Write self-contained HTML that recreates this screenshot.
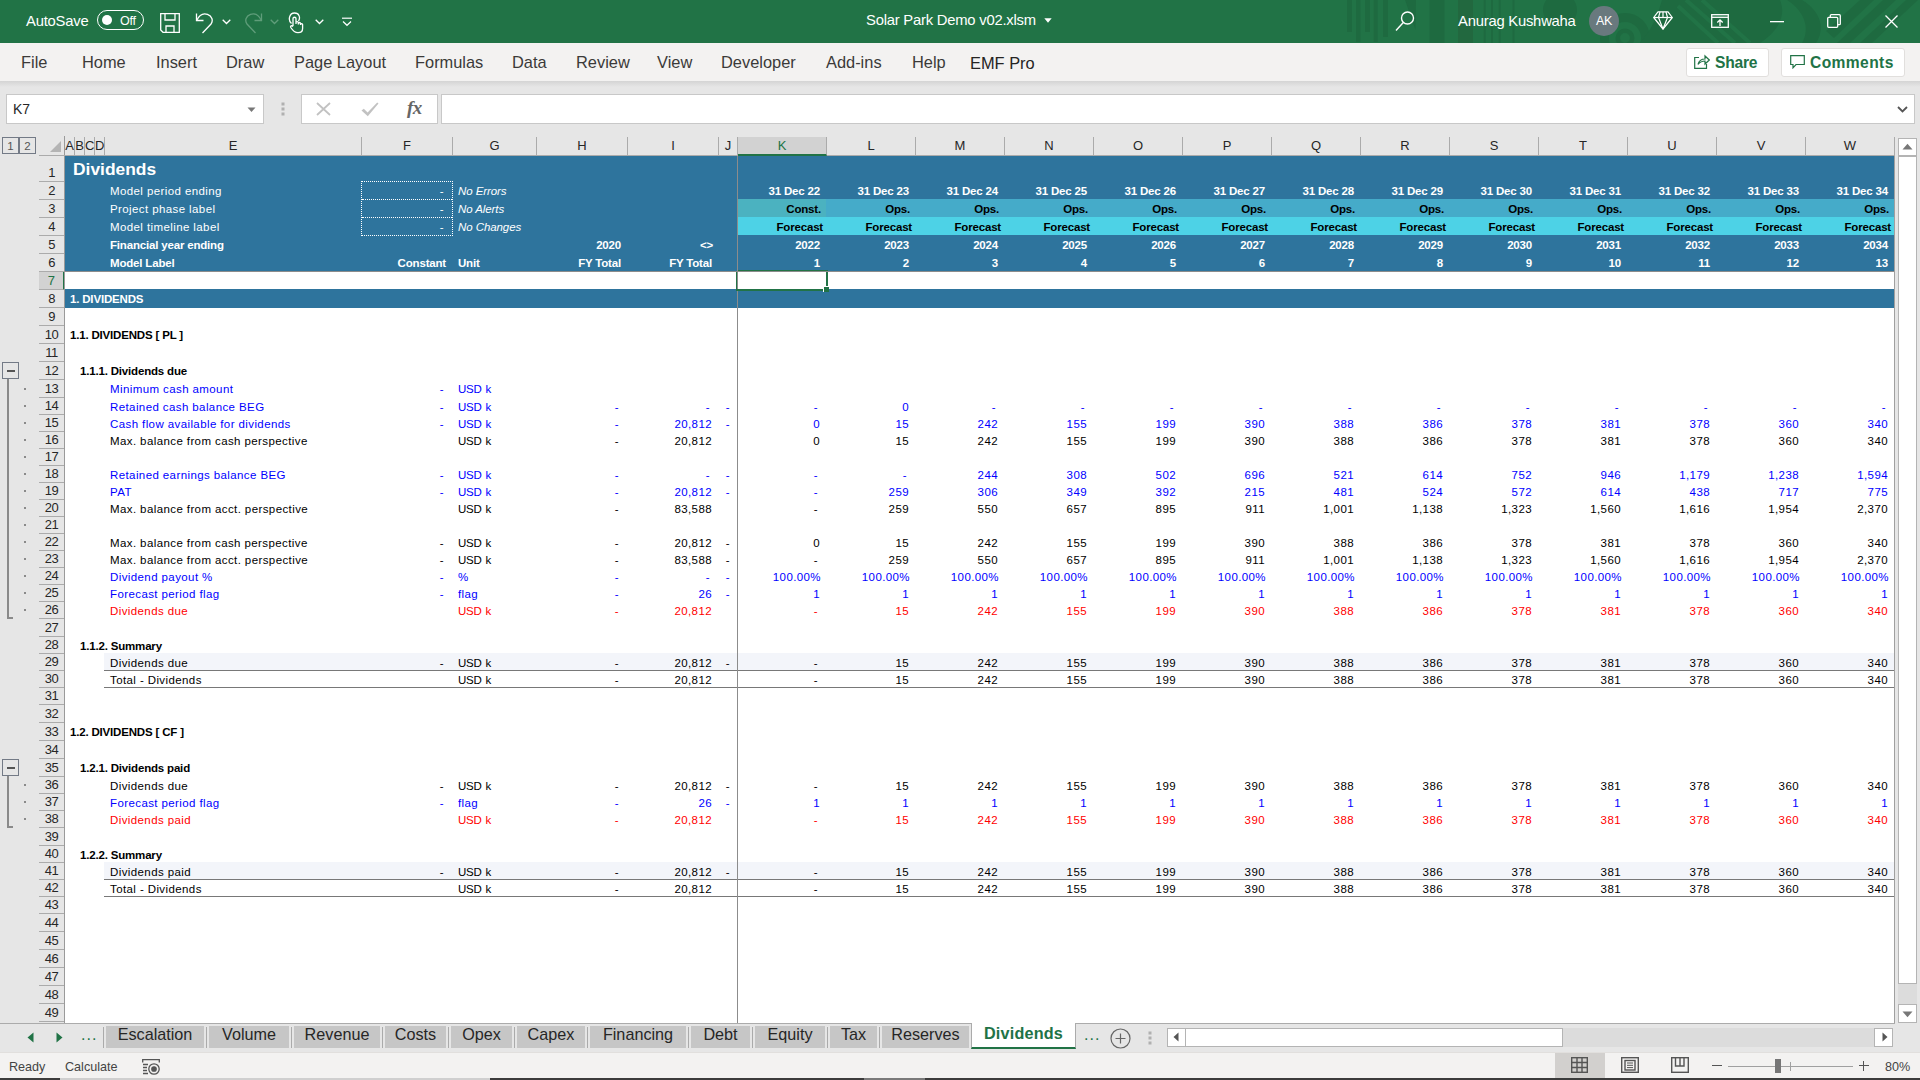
<!DOCTYPE html>
<html lang="en"><head><meta charset="utf-8"><title>Solar Park Demo v02.xlsm - Excel</title>
<style>
html,body{margin:0;padding:0;background:#e6e6e6;}
body{width:1920px;height:1080px;overflow:hidden;font-family:"Liberation Sans",sans-serif;}
#app{position:relative;width:1920px;height:1080px;overflow:hidden;background:#e6e6e6;}
#app div,#app span,#app svg{position:absolute;box-sizing:border-box;}
/* title bar */
#titlebar{left:0;top:0;width:1920px;height:43px;background:#217346;color:#fff;font-size:14.8px;letter-spacing:-0.22px;overflow:hidden;}
#titlebar .tt{white-space:nowrap;line-height:43px;top:0;height:43px;}
#menubar{left:0;top:43px;width:1920px;height:38px;background:#f3f2f1;color:#3b3a39;font-size:16.4px;}
#menubar .m{top:0;height:39px;line-height:38px;white-space:nowrap;color:#3b3a39;}
#menushadow{left:0;top:81px;width:1920px;height:6px;background:linear-gradient(#d4d4d4,#e6e6e6);}
.btn{background:#fff;border:1px solid #e1dfdd;border-radius:3px;}
/* formula bar */
#namebox{left:6px;top:94px;width:258px;height:30px;background:#fff;border:1px solid #c8c8c8;}
#fxbox{left:301px;top:94px;width:137px;height:30px;background:#fff;border:1px solid #c8c8c8;}
#formula{left:441px;top:94px;width:1474px;height:30px;background:#fff;border:1px solid #c8c8c8;}
/* sheet */
#sheet{left:0;top:0;width:1920px;height:1023px;}
#sheetbg{left:65px;top:156px;width:1830px;height:867px;background:#fff;}
#colhdr{left:0;top:137px;width:1895px;height:19px;}
.ch{top:0;height:19px;line-height:17px;text-align:center;font-size:13px;color:#262626;border-right:1px solid #ababab;border-bottom:1px solid #ababab;}
#app .ch{box-sizing:content-box;height:18px;}
.ch.sel{background:#d2d2d2;color:#217346;border-bottom:2px solid #217346;height:17px !important;}
#rowhdr{left:39px;top:0;width:26px;height:1023px;}
.rh{left:0;width:25px;text-align:center;padding-right:0;font-size:13px;letter-spacing:-0.5px;color:#262626;border-bottom:1px solid #ababab;}
#app .rh{box-sizing:content-box;width:25px;}
.rh.sel{background:#d2d2d2;color:#217346;border-right:2px solid #217346;width:24px !important;}
.f{}
.t{white-space:nowrap;font-size:11.5px;letter-spacing:0.4px;color:#000;overflow:visible;}
.t.r{text-align:right;}
.t.b{font-weight:bold;letter-spacing:-0.18px;}
.t.i{font-style:italic;letter-spacing:-0.08px;}
.t.u{letter-spacing:-0.3px;word-spacing:1.2px;}
.t.w{color:#fff;}
.t.bl{color:#0000ff;}
.t.rd{color:#ff0000;}
.t.title{font-size:17.4px;font-weight:bold;color:#fff;letter-spacing:0;}
.dot{border:1px dotted #fff;}
.g{background:#217346;}
/* outline */
.lvl{top:137px;width:17px;height:17px;border:1px solid #737a86;font-size:11.5px;line-height:17px;text-align:center;color:#555;}
.obox{left:2px;width:17px;height:17px;border:1px solid #737a86;background:#e6e6e6;}
.obox:after{content:"";position:absolute;left:4px;top:7px;width:8px;height:1px;background:#555;border-top:1px solid #555;}
.oline{left:7px;width:2px;background:#8a8a8a;}
.ofoot{left:7px;width:6px;height:2px;background:#8a8a8a;}
.odot{left:24px;width:2px;height:2px;background:#8a8a8a;}
/* bottom */
#tabbar{left:0;top:1024px;width:1920px;height:28px;background:#e6e6e6;}
.tab{top:2px;height:22px;background:#c6c6c6;font-size:16.2px;line-height:17px;text-align:center;color:#262626;white-space:nowrap;}
.tab.act{background:#fff;color:#217346;font-weight:bold;border-bottom:2px solid #217346;top:-1px;height:26px;line-height:21px;letter-spacing:0.2px;border-left:1px solid #ababab;border-right:1px solid #ababab;}
.tsep{top:3px;width:1px;height:21px;background:#ababab;}
#statusbar{left:0;top:1052px;width:1920px;height:26px;background:#f3f2f1;color:#444;font-size:12.6px;border-top:1px solid #e1dfdd;}
#statusbar .s{top:0;height:26px;line-height:29px;white-space:nowrap;}
#bottomline{left:0;top:1078px;width:1920px;height:2px;background:#3c3c3c;}
.doth{height:0;border-top:1px dotted #fff;}

</style></head>
<body>
<div id="app">
<div id="titlebar">
<svg id="tbpattern" style="left:1340px;top:0" width="580" height="43" viewBox="0 0 580 43">
<g fill="#1e6a40">
<rect x="7" y="0" width="5" height="32"/><rect x="16" y="0" width="4.5" height="42"/><rect x="25" y="0" width="5" height="32"/><rect x="33.7" y="0" width="4" height="42"/><rect x="43" y="0" width="5" height="37"/>
<path d="M65 0H76L75.5 30Z"/>
<rect x="89.5" y="0" width="15" height="43"/>
<rect x="118" y="0" width="15" height="43" fill="#22683f"/>
<rect x="143.7" y="0" width="2" height="43"/><rect x="151" y="0" width="2" height="43"/><rect x="158.7" y="0" width="2" height="43"/><rect x="172.5" y="0" width="2" height="43"/>
<circle cx="220" cy="10" r="17"/>
<circle cx="285" cy="38" r="7.2" fill="none" stroke="#1e6a40" stroke-width="4.5"/>
<circle cx="285" cy="38" r="20.5" fill="none" stroke="#1e6a40" stroke-width="9"/>
<path d="M322 0 C318 14 312 30 300 43 L420 43 C440 30 446 14 440 0Z"/>
</g>
<g stroke="#217346" stroke-width="4" fill="none"><path d="M338 6L378 43M346 0L395 43M362 0L410 43"/></g>
<g fill="#1e6a40">
<path d="M447 0 C466 12 470 30 462 43 L476 43 C485 30 482 12 462 0Z"/>
<path d="M520 0 L534 0 L494 38 L486 31Z"/><path d="M543 0 L556 0 L510 43 L497 43Z"/><path d="M566 0 L578 0 L532 43 L520 43Z"/>
</g>
</svg>
<span class="tt" style="left:26px">AutoSave</span>
<div style="left:97px;top:10px;width:47px;height:20px;border:1px solid #fff;border-radius:10px"></div>
<div style="left:102px;top:15px;width:10px;height:10px;border-radius:5px;background:#fff"></div>
<span class="tt" style="left:120px;font-size:12.5px;top:0">Off</span>
<!-- save -->
<svg style="left:160px;top:13px" width="20" height="20" viewBox="0 0 20 20" fill="none" stroke="#fff" stroke-width="1.3"><path d="M0.7 0.7H19.3V19.3H3L0.7 17Z"/><path d="M5 0.7V7H15V0.7"/><path d="M6 19.3V13H14V19.3"/></svg>
<!-- undo -->
<svg style="left:195px;top:12px" width="20" height="22" viewBox="0 0 20 22" fill="none" stroke="#fff" stroke-width="1.3"><path d="M1.5 1.5V8.5H8.5"/><path d="M1.8 8.2C4 3.5 8 0.8 12.5 2.3C17 4 18.5 8.5 16 12L7.5 21"/></svg>
<svg style="left:222px;top:19px" width="9" height="6" viewBox="0 0 9 6" fill="none" stroke="#fff" stroke-width="1.3"><path d="M0.7 0.7L4.5 4.5L8.3 0.7"/></svg>
<!-- redo (dim) -->
<svg style="left:243px;top:12px" width="20" height="22" viewBox="0 0 20 22" fill="none" stroke="#5f9d7a" stroke-width="1.3"><path d="M18.5 1.5V8.5H11.5"/><path d="M18.2 8.2C16 3.5 12 0.8 7.5 2.3C3 4 1.5 8.5 4 12L12.5 21"/></svg>
<svg style="left:270px;top:19px" width="9" height="6" viewBox="0 0 9 6" fill="none" stroke="#5f9d7a" stroke-width="1.3"><path d="M0.7 0.7L4.5 4.5L8.3 0.7"/></svg>
<!-- touch -->
<svg style="left:288px;top:12px" width="16" height="22" viewBox="0 0 16 22" fill="none" stroke="#fff" stroke-width="1.3"><path d="M3.5 11.5C-0.5 8 1.5 1 6.5 1C11.5 1 12.5 6 10.5 9"/><path d="M5 14V6.5C5 4.8 8 4.8 8 6.5V12V10.5C8 9.3 10.3 9.3 10.3 10.5V12.5V11.3C10.3 10.2 12.5 10.2 12.5 11.5V13V12.3C12.5 11.3 14.6 11.3 14.6 12.5V16.5C14.6 19 13 20.7 10 20.7C6.5 20.7 5 19 2.8 15.5C2 14 3.5 13 5 14.5"/></svg>
<svg style="left:315px;top:19px" width="9" height="6" viewBox="0 0 9 6" fill="none" stroke="#fff" stroke-width="1.3"><path d="M0.7 0.7L4.5 4.5L8.3 0.7"/></svg>
<svg style="left:342px;top:17px" width="10" height="10" viewBox="0 0 10 10" fill="none" stroke="#fff" stroke-width="1.2"><path d="M0 1.2H10"/><path d="M1 4.5L5 8.3L9 4.5"/></svg>
<span class="tt" style="left:866px;top:-1px">Solar Park Demo v02.xlsm</span>
<svg style="left:1044px;top:18px" width="8" height="5" viewBox="0 0 8 5"><path d="M0.3 0.3H7.7L4 4.7Z" fill="#fff"/></svg>
<!-- search -->
<svg style="left:1395px;top:10px" width="20" height="22" viewBox="0 0 20 22" fill="none" stroke="#fff" stroke-width="1.4"><circle cx="12.5" cy="8" r="6"/><path d="M8.3 12.5L1 20.5"/></svg>
<span class="tt" style="left:1458px">Anurag Kushwaha</span>
<div style="left:1589px;top:6px;width:30px;height:30px;border-radius:15px;background:#69797e"></div>
<span class="tt" style="left:1589px;width:30px;text-align:center;font-size:12.5px">AK</span>
<!-- diamond -->
<svg style="left:1653px;top:11px" width="20" height="19" viewBox="0 0 20 19" fill="none" stroke="#fff" stroke-width="1.2" stroke-linejoin="round"><path d="M5 0.8H15L19.3 6.5L10 18L0.7 6.5Z"/><path d="M0.7 6.5H19.3"/><path d="M7 0.8L5.5 6.5L10 18L14.5 6.5L13 0.8"/><path d="M10 0.8V6.5"/></svg>
<!-- ribbon display -->
<svg style="left:1711px;top:14px" width="18" height="14" viewBox="0 0 18 14" fill="none" stroke="#fff" stroke-width="1.3"><rect x="0.7" y="0.7" width="16.6" height="12.6"/><path d="M0.7 3.3H17.3"/><path d="M9 12V6M6.3 8.5L9 5.8L11.7 8.5"/></svg>
<!-- min / restore / close -->
<svg style="left:1770px;top:21px" width="14" height="2" viewBox="0 0 14 2"><rect width="14" height="1.3" fill="#fff"/></svg>
<svg style="left:1827px;top:14px" width="14" height="14" viewBox="0 0 14 14" fill="none" stroke="#fff" stroke-width="1.3"><rect x="0.7" y="3.3" width="10" height="10" rx="1"/><path d="M3.3 3.3V1.7C3.3 1 3.8 0.7 4.3 0.7H12.3C13 0.7 13.3 1.2 13.3 1.7V9.7C13.3 10.3 13 10.7 12.3 10.7H10.7"/></svg>
<svg style="left:1885px;top:15px" width="13" height="13" viewBox="0 0 13 13" fill="none" stroke="#fff" stroke-width="1.3"><path d="M0.5 0.5L12.5 12.5M12.5 0.5L0.5 12.5"/></svg>
</div>
<div id="menubar">
<span class="m" style="left:21px">File</span>
<span class="m" style="left:82px">Home</span>
<span class="m" style="left:156px">Insert</span>
<span class="m" style="left:226px">Draw</span>
<span class="m" style="left:294px">Page Layout</span>
<span class="m" style="left:415px">Formulas</span>
<span class="m" style="left:512px">Data</span>
<span class="m" style="left:576px">Review</span>
<span class="m" style="left:657px">View</span>
<span class="m" style="left:721px">Developer</span>
<span class="m" style="left:826px">Add-ins</span>
<span class="m" style="left:912px">Help</span>
<span class="m" style="left:970px;color:#252423;line-height:40px">EMF Pro</span>
<div class="btn" style="left:1686px;top:5px;width:83px;height:29px"></div>
<svg style="left:1694px;top:11px" width="16" height="15" viewBox="0 0 16 15" fill="none" stroke="#217346" stroke-width="1.2"><path d="M5 3.5H0.7V14.3H12.5V10"/><path d="M4 10.5C5 6.5 8 5 11 5V2L15.3 6L11 10V7C8 7 6 8 4 10.5Z"/></svg>
<span class="m" style="left:1715px;font-weight:bold;font-size:15.6px;color:#217346;letter-spacing:-0.2px;line-height:40px">Share</span>
<div class="btn" style="left:1781px;top:5px;width:124px;height:29px"></div>
<svg style="left:1790px;top:12px" width="15" height="14" viewBox="0 0 15 14" fill="none" stroke="#217346" stroke-width="1.2"><path d="M0.7 0.7H14.3V9.5H6L3 12.8V9.5H0.7Z"/></svg>
<span class="m" style="left:1810px;font-weight:bold;font-size:15.6px;color:#217346;letter-spacing:0.4px;line-height:40px">Comments</span>
</div>
<div id="menushadow"></div>
<div id="namebox"><span style="left:6px;top:0;line-height:28px;font-size:14px;color:#262626">K7</span>
<svg style="left:240px;top:12px" width="9" height="6" viewBox="0 0 9 6"><path d="M0.5 0.5H8.5L4.5 5Z" fill="#777"/></svg></div>
<svg style="left:281px;top:102px" width="4" height="14" viewBox="0 0 4 14" fill="#b0b0b0"><rect x="0.5" y="0.5" width="3" height="3"/><rect x="0.5" y="5.5" width="3" height="3"/><rect x="0.5" y="10.5" width="3" height="3"/></svg>
<div id="fxbox">
<svg style="left:14px;top:7px" width="15" height="14" viewBox="0 0 15 14" fill="none" stroke="#c2c2c2" stroke-width="1.8"><path d="M1 1L14 13M14 1L1 13"/></svg>
<svg style="left:59px;top:7px" width="18" height="15" viewBox="0 0 18 15" fill="#c2c2c2"><path d="M0.5 8.5L2.8 6.8L6.6 10.6L16.2 0.5L17.5 1.6L6.8 14.2Z"/></svg>
<span style="left:105px;top:0;line-height:26px;font-family:'Liberation Serif',serif;font-style:italic;font-weight:bold;font-size:19px;color:#666;letter-spacing:-0.5px">fx</span>
</div>
<div id="formula"><svg style="left:1455px;top:11px" width="11" height="7" viewBox="0 0 11 7" fill="none" stroke="#555" stroke-width="1.8"><path d="M1 1L5.5 5.5L10 1"/></svg></div>
<div id="sheetbg"></div>
<div style="left:1895px;top:130px;width:25px;height:893px;background:#e6e6e6"></div>
<div style="left:1898px;top:138px;width:19px;height:885px;background:#dcdcdc"></div>
<div style="left:1898px;top:156px;width:19px;height:828px;background:#fff;border:1px solid #b4b4b4"></div>
<div style="left:1898px;top:138px;width:19px;height:19px;background:#fff;border:1px solid #b4b4b4;border-bottom:2px solid #b4b4b4"></div>
<svg style="left:1902px;top:143px" width="11" height="7" viewBox="0 0 11 7"><path d="M0.5 6.5H10.5L5.5 0.8Z" fill="#777"/></svg>
<div style="left:1898px;top:1004px;width:19px;height:19px;background:#fff;border:1px solid #b4b4b4"></div>
<svg style="left:1902px;top:1011px" width="11" height="7" viewBox="0 0 11 7"><path d="M0.5 0.5H10.5L5.5 6.2Z" fill="#777"/></svg>
<div id="sheet">
<div id="colhdr"><div class="ch" style="left:65px;width:9px">A</div><div class="ch" style="left:75px;width:9px">B</div><div class="ch" style="left:85px;width:9px">C</div><div class="ch" style="left:95px;width:9px">D</div><div class="ch" style="left:105px;width:256px">E</div><div class="ch" style="left:362px;width:90px">F</div><div class="ch" style="left:453px;width:83px">G</div><div class="ch" style="left:537px;width:90px">H</div><div class="ch" style="left:628px;width:90px">I</div><div class="ch" style="left:719px;width:18px">J</div><div class="ch sel" style="left:738px;width:88px">K</div><div class="ch" style="left:827px;width:88px">L</div><div class="ch" style="left:916px;width:88px">M</div><div class="ch" style="left:1005px;width:88px">N</div><div class="ch" style="left:1094px;width:88px">O</div><div class="ch" style="left:1183px;width:88px">P</div><div class="ch" style="left:1272px;width:88px">Q</div><div class="ch" style="left:1361px;width:88px">R</div><div class="ch" style="left:1450px;width:88px">S</div><div class="ch" style="left:1539px;width:88px">T</div><div class="ch" style="left:1628px;width:88px">U</div><div class="ch" style="left:1717px;width:88px">V</div><div class="ch" style="left:1806px;width:88px">W</div></div>
<div id="rowhdr"><div class="rh" style="top:156px;height:25px;line-height:34px">1</div><div class="rh" style="top:182px;height:17px;line-height:18px">2</div><div class="rh" style="top:200px;height:17px;line-height:18px">3</div><div class="rh" style="top:218px;height:17px;line-height:18px">4</div><div class="rh" style="top:236px;height:17px;line-height:18px">5</div><div class="rh" style="top:254px;height:17px;line-height:18px">6</div><div class="rh sel" style="top:272px;height:17px;line-height:18px">7</div><div class="rh" style="top:290px;height:17px;line-height:18px">8</div><div class="rh" style="top:308px;height:17px;line-height:18px">9</div><div class="rh" style="top:326px;height:17px;line-height:18px">10</div><div class="rh" style="top:344px;height:17px;line-height:18px">11</div><div class="rh" style="top:362px;height:17px;line-height:18px">12</div><div class="rh" style="top:380px;height:17px;line-height:18px">13</div><div class="rh" style="top:398px;height:16px;line-height:15px">14</div><div class="rh" style="top:415px;height:16px;line-height:15px">15</div><div class="rh" style="top:432px;height:16px;line-height:15px">16</div><div class="rh" style="top:449px;height:16px;line-height:15px">17</div><div class="rh" style="top:466px;height:16px;line-height:15px">18</div><div class="rh" style="top:483px;height:16px;line-height:15px">19</div><div class="rh" style="top:500px;height:16px;line-height:15px">20</div><div class="rh" style="top:517px;height:16px;line-height:15px">21</div><div class="rh" style="top:534px;height:16px;line-height:15px">22</div><div class="rh" style="top:551px;height:16px;line-height:15px">23</div><div class="rh" style="top:568px;height:16px;line-height:15px">24</div><div class="rh" style="top:585px;height:16px;line-height:15px">25</div><div class="rh" style="top:602px;height:16px;line-height:15px">26</div><div class="rh" style="top:619px;height:17px;line-height:18px">27</div><div class="rh" style="top:637px;height:16px;line-height:15px">28</div><div class="rh" style="top:654px;height:16px;line-height:15px">29</div><div class="rh" style="top:671px;height:16px;line-height:15px">30</div><div class="rh" style="top:688px;height:16px;line-height:15px">31</div><div class="rh" style="top:705px;height:17px;line-height:18px">32</div><div class="rh" style="top:723px;height:17px;line-height:18px">33</div><div class="rh" style="top:741px;height:17px;line-height:18px">34</div><div class="rh" style="top:759px;height:17px;line-height:18px">35</div><div class="rh" style="top:777px;height:16px;line-height:15px">36</div><div class="rh" style="top:794px;height:16px;line-height:15px">37</div><div class="rh" style="top:811px;height:16px;line-height:15px">38</div><div class="rh" style="top:828px;height:17px;line-height:18px">39</div><div class="rh" style="top:846px;height:16px;line-height:15px">40</div><div class="rh" style="top:863px;height:16px;line-height:15px">41</div><div class="rh" style="top:880px;height:16px;line-height:15px">42</div><div class="rh" style="top:897px;height:16px;line-height:15px">43</div><div class="rh" style="top:914px;height:17px;line-height:18px">44</div><div class="rh" style="top:932px;height:17px;line-height:18px">45</div><div class="rh" style="top:950px;height:17px;line-height:18px">46</div><div class="rh" style="top:968px;height:17px;line-height:18px">47</div><div class="rh" style="top:986px;height:17px;line-height:18px">48</div><div class="rh" style="top:1004px;height:17px;line-height:18px">49</div></div>
<div class="f" style="left:65px;top:156px;width:1830px;height:116px;background:#2e749d;"></div><div class="f" style="left:65px;top:289px;width:1830px;height:19px;background:#2e749d;"></div><div class="f" style="left:738px;top:199px;width:88px;height:18px;background:#4bb2c0;"></div><div class="f" style="left:826px;top:199px;width:1069px;height:18px;background:#45abc9;"></div><div class="f" style="left:738px;top:217px;width:1157px;height:18px;background:#4dd2e6;"></div><div class="f" style="left:104px;top:653px;width:1791px;height:17px;background:#f3f5fa;"></div><div class="f" style="left:104px;top:670px;width:1791px;height:1px;background:#787878;"></div><div class="f" style="left:104px;top:687px;width:1791px;height:1px;background:#787878;"></div><div class="f" style="left:104px;top:862px;width:1791px;height:17px;background:#f3f5fa;"></div><div class="f" style="left:104px;top:879px;width:1791px;height:1px;background:#787878;"></div><div class="f" style="left:104px;top:896px;width:1791px;height:1px;background:#787878;"></div><div class="dot" style="left:361px;top:181px;width:92px;height:55px"></div><div class="doth" style="left:362px;top:199px;width:90px"></div><div class="doth" style="left:362px;top:217px;width:90px"></div><div class="t title" style="left:73px;top:156px;height:26px;line-height:27px">Dividends</div><div class="t w" style="left:110px;top:182px;height:18px;line-height:19px">Model period ending</div><div class="t w" style="left:110px;top:200px;height:18px;line-height:19px">Project phase label</div><div class="t w" style="left:110px;top:218px;height:18px;line-height:19px">Model timeline label</div><div class="t w b" style="left:110px;top:236px;height:18px;line-height:19px">Financial year ending</div><div class="t w b" style="left:110px;top:254px;height:18px;line-height:19px">Model Label</div><div class="t r w" style="left:324px;width:120px;top:182px;height:18px;line-height:19px">-</div><div class="t r w" style="left:324px;width:120px;top:200px;height:18px;line-height:19px">-</div><div class="t r w" style="left:324px;width:120px;top:218px;height:18px;line-height:19px">-</div><div class="t w i" style="left:458px;top:182px;height:18px;line-height:19px">No Errors</div><div class="t w i" style="left:458px;top:200px;height:18px;line-height:19px">No Alerts</div><div class="t w i" style="left:458px;top:218px;height:18px;line-height:19px">No Changes</div><div class="t r w b" style="left:501px;width:120px;top:236px;height:18px;line-height:19px">2020</div><div class="t r w b" style="left:593px;width:120px;top:236px;height:18px;line-height:19px">&lt;&gt;</div><div class="t r w b" style="left:326px;width:120px;top:254px;height:18px;line-height:19px">Constant</div><div class="t w b" style="left:458px;top:254px;height:18px;line-height:19px">Unit</div><div class="t r w b" style="left:501px;width:120px;top:254px;height:18px;line-height:19px">FY Total</div><div class="t r w b" style="left:592px;width:120px;top:254px;height:18px;line-height:19px">FY Total</div><div class="t r w b" style="left:700px;width:120px;top:182px;height:18px;line-height:19px">31 Dec 22</div><div class="t r b" style="left:701px;width:120px;top:200px;height:18px;line-height:19px">Const.</div><div class="t r b" style="left:703px;width:120px;top:218px;height:18px;line-height:19px">Forecast</div><div class="t r w b" style="left:700px;width:120px;top:236px;height:18px;line-height:19px">2022</div><div class="t r w b" style="left:700px;width:120px;top:254px;height:18px;line-height:19px">1</div><div class="t r w b" style="left:789px;width:120px;top:182px;height:18px;line-height:19px">31 Dec 23</div><div class="t r b" style="left:790px;width:120px;top:200px;height:18px;line-height:19px">Ops.</div><div class="t r b" style="left:792px;width:120px;top:218px;height:18px;line-height:19px">Forecast</div><div class="t r w b" style="left:789px;width:120px;top:236px;height:18px;line-height:19px">2023</div><div class="t r w b" style="left:789px;width:120px;top:254px;height:18px;line-height:19px">2</div><div class="t r w b" style="left:878px;width:120px;top:182px;height:18px;line-height:19px">31 Dec 24</div><div class="t r b" style="left:879px;width:120px;top:200px;height:18px;line-height:19px">Ops.</div><div class="t r b" style="left:881px;width:120px;top:218px;height:18px;line-height:19px">Forecast</div><div class="t r w b" style="left:878px;width:120px;top:236px;height:18px;line-height:19px">2024</div><div class="t r w b" style="left:878px;width:120px;top:254px;height:18px;line-height:19px">3</div><div class="t r w b" style="left:967px;width:120px;top:182px;height:18px;line-height:19px">31 Dec 25</div><div class="t r b" style="left:968px;width:120px;top:200px;height:18px;line-height:19px">Ops.</div><div class="t r b" style="left:970px;width:120px;top:218px;height:18px;line-height:19px">Forecast</div><div class="t r w b" style="left:967px;width:120px;top:236px;height:18px;line-height:19px">2025</div><div class="t r w b" style="left:967px;width:120px;top:254px;height:18px;line-height:19px">4</div><div class="t r w b" style="left:1056px;width:120px;top:182px;height:18px;line-height:19px">31 Dec 26</div><div class="t r b" style="left:1057px;width:120px;top:200px;height:18px;line-height:19px">Ops.</div><div class="t r b" style="left:1059px;width:120px;top:218px;height:18px;line-height:19px">Forecast</div><div class="t r w b" style="left:1056px;width:120px;top:236px;height:18px;line-height:19px">2026</div><div class="t r w b" style="left:1056px;width:120px;top:254px;height:18px;line-height:19px">5</div><div class="t r w b" style="left:1145px;width:120px;top:182px;height:18px;line-height:19px">31 Dec 27</div><div class="t r b" style="left:1146px;width:120px;top:200px;height:18px;line-height:19px">Ops.</div><div class="t r b" style="left:1148px;width:120px;top:218px;height:18px;line-height:19px">Forecast</div><div class="t r w b" style="left:1145px;width:120px;top:236px;height:18px;line-height:19px">2027</div><div class="t r w b" style="left:1145px;width:120px;top:254px;height:18px;line-height:19px">6</div><div class="t r w b" style="left:1234px;width:120px;top:182px;height:18px;line-height:19px">31 Dec 28</div><div class="t r b" style="left:1235px;width:120px;top:200px;height:18px;line-height:19px">Ops.</div><div class="t r b" style="left:1237px;width:120px;top:218px;height:18px;line-height:19px">Forecast</div><div class="t r w b" style="left:1234px;width:120px;top:236px;height:18px;line-height:19px">2028</div><div class="t r w b" style="left:1234px;width:120px;top:254px;height:18px;line-height:19px">7</div><div class="t r w b" style="left:1323px;width:120px;top:182px;height:18px;line-height:19px">31 Dec 29</div><div class="t r b" style="left:1324px;width:120px;top:200px;height:18px;line-height:19px">Ops.</div><div class="t r b" style="left:1326px;width:120px;top:218px;height:18px;line-height:19px">Forecast</div><div class="t r w b" style="left:1323px;width:120px;top:236px;height:18px;line-height:19px">2029</div><div class="t r w b" style="left:1323px;width:120px;top:254px;height:18px;line-height:19px">8</div><div class="t r w b" style="left:1412px;width:120px;top:182px;height:18px;line-height:19px">31 Dec 30</div><div class="t r b" style="left:1413px;width:120px;top:200px;height:18px;line-height:19px">Ops.</div><div class="t r b" style="left:1415px;width:120px;top:218px;height:18px;line-height:19px">Forecast</div><div class="t r w b" style="left:1412px;width:120px;top:236px;height:18px;line-height:19px">2030</div><div class="t r w b" style="left:1412px;width:120px;top:254px;height:18px;line-height:19px">9</div><div class="t r w b" style="left:1501px;width:120px;top:182px;height:18px;line-height:19px">31 Dec 31</div><div class="t r b" style="left:1502px;width:120px;top:200px;height:18px;line-height:19px">Ops.</div><div class="t r b" style="left:1504px;width:120px;top:218px;height:18px;line-height:19px">Forecast</div><div class="t r w b" style="left:1501px;width:120px;top:236px;height:18px;line-height:19px">2031</div><div class="t r w b" style="left:1501px;width:120px;top:254px;height:18px;line-height:19px">10</div><div class="t r w b" style="left:1590px;width:120px;top:182px;height:18px;line-height:19px">31 Dec 32</div><div class="t r b" style="left:1591px;width:120px;top:200px;height:18px;line-height:19px">Ops.</div><div class="t r b" style="left:1593px;width:120px;top:218px;height:18px;line-height:19px">Forecast</div><div class="t r w b" style="left:1590px;width:120px;top:236px;height:18px;line-height:19px">2032</div><div class="t r w b" style="left:1590px;width:120px;top:254px;height:18px;line-height:19px">11</div><div class="t r w b" style="left:1679px;width:120px;top:182px;height:18px;line-height:19px">31 Dec 33</div><div class="t r b" style="left:1680px;width:120px;top:200px;height:18px;line-height:19px">Ops.</div><div class="t r b" style="left:1682px;width:120px;top:218px;height:18px;line-height:19px">Forecast</div><div class="t r w b" style="left:1679px;width:120px;top:236px;height:18px;line-height:19px">2033</div><div class="t r w b" style="left:1679px;width:120px;top:254px;height:18px;line-height:19px">12</div><div class="t r w b" style="left:1768px;width:120px;top:182px;height:18px;line-height:19px">31 Dec 34</div><div class="t r b" style="left:1769px;width:120px;top:200px;height:18px;line-height:19px">Ops.</div><div class="t r b" style="left:1771px;width:120px;top:218px;height:18px;line-height:19px">Forecast</div><div class="t r w b" style="left:1768px;width:120px;top:236px;height:18px;line-height:19px">2034</div><div class="t r w b" style="left:1768px;width:120px;top:254px;height:18px;line-height:19px">13</div><div class="t w b" style="left:70px;top:290px;height:18px;line-height:19px">1. DIVIDENDS</div><div class="t b" style="left:70px;top:326px;height:18px;line-height:19px">1.1. DIVIDENDS [ PL ]</div><div class="t b" style="left:70px;top:723px;height:18px;line-height:19px">1.2. DIVIDENDS [ CF ]</div><div class="t b" style="left:80px;top:362px;height:18px;line-height:19px">1.1.1. Dividends due</div><div class="t b" style="left:80px;top:637px;height:17px;line-height:18px">1.1.2. Summary</div><div class="t b" style="left:80px;top:759px;height:18px;line-height:19px">1.2.1. Dividends paid</div><div class="t b" style="left:80px;top:846px;height:17px;line-height:18px">1.2.2. Summary</div><div class="t bl" style="left:110px;top:380px;height:18px;line-height:19px">Minimum cash amount</div><div class="t r bl" style="left:324px;width:120px;top:380px;height:18px;line-height:19px">-</div><div class="t bl u" style="left:458px;top:380px;height:18px;line-height:19px">USD k</div><div class="t bl" style="left:110px;top:398px;height:17px;line-height:18px">Retained cash balance BEG</div><div class="t r bl" style="left:324px;width:120px;top:398px;height:17px;line-height:18px">-</div><div class="t bl u" style="left:458px;top:398px;height:17px;line-height:18px">USD k</div><div class="t r bl" style="left:499px;width:120px;top:398px;height:17px;line-height:18px">-</div><div class="t r bl" style="left:590px;width:120px;top:398px;height:17px;line-height:18px">-</div><div class="t r bl" style="left:610px;width:120px;top:398px;height:17px;line-height:18px">-</div><div class="t r bl" style="left:698px;width:120px;top:398px;height:17px;line-height:18px">-</div><div class="t r bl" style="left:789px;width:120px;top:398px;height:17px;line-height:18px">0</div><div class="t r bl" style="left:876px;width:120px;top:398px;height:17px;line-height:18px">-</div><div class="t r bl" style="left:965px;width:120px;top:398px;height:17px;line-height:18px">-</div><div class="t r bl" style="left:1054px;width:120px;top:398px;height:17px;line-height:18px">-</div><div class="t r bl" style="left:1143px;width:120px;top:398px;height:17px;line-height:18px">-</div><div class="t r bl" style="left:1232px;width:120px;top:398px;height:17px;line-height:18px">-</div><div class="t r bl" style="left:1321px;width:120px;top:398px;height:17px;line-height:18px">-</div><div class="t r bl" style="left:1410px;width:120px;top:398px;height:17px;line-height:18px">-</div><div class="t r bl" style="left:1499px;width:120px;top:398px;height:17px;line-height:18px">-</div><div class="t r bl" style="left:1588px;width:120px;top:398px;height:17px;line-height:18px">-</div><div class="t r bl" style="left:1677px;width:120px;top:398px;height:17px;line-height:18px">-</div><div class="t r bl" style="left:1766px;width:120px;top:398px;height:17px;line-height:18px">-</div><div class="t bl" style="left:110px;top:415px;height:17px;line-height:18px">Cash flow available for dividends</div><div class="t r bl" style="left:324px;width:120px;top:415px;height:17px;line-height:18px">-</div><div class="t bl u" style="left:458px;top:415px;height:17px;line-height:18px">USD k</div><div class="t r bl" style="left:499px;width:120px;top:415px;height:17px;line-height:18px">-</div><div class="t r bl" style="left:592px;width:120px;top:415px;height:17px;line-height:18px">20,812</div><div class="t r bl" style="left:610px;width:120px;top:415px;height:17px;line-height:18px">-</div><div class="t r bl" style="left:700px;width:120px;top:415px;height:17px;line-height:18px">0</div><div class="t r bl" style="left:789px;width:120px;top:415px;height:17px;line-height:18px">15</div><div class="t r bl" style="left:878px;width:120px;top:415px;height:17px;line-height:18px">242</div><div class="t r bl" style="left:967px;width:120px;top:415px;height:17px;line-height:18px">155</div><div class="t r bl" style="left:1056px;width:120px;top:415px;height:17px;line-height:18px">199</div><div class="t r bl" style="left:1145px;width:120px;top:415px;height:17px;line-height:18px">390</div><div class="t r bl" style="left:1234px;width:120px;top:415px;height:17px;line-height:18px">388</div><div class="t r bl" style="left:1323px;width:120px;top:415px;height:17px;line-height:18px">386</div><div class="t r bl" style="left:1412px;width:120px;top:415px;height:17px;line-height:18px">378</div><div class="t r bl" style="left:1501px;width:120px;top:415px;height:17px;line-height:18px">381</div><div class="t r bl" style="left:1590px;width:120px;top:415px;height:17px;line-height:18px">378</div><div class="t r bl" style="left:1679px;width:120px;top:415px;height:17px;line-height:18px">360</div><div class="t r bl" style="left:1768px;width:120px;top:415px;height:17px;line-height:18px">340</div><div class="t " style="left:110px;top:432px;height:17px;line-height:18px">Max. balance from cash perspective</div><div class="t  u" style="left:458px;top:432px;height:17px;line-height:18px">USD k</div><div class="t r " style="left:499px;width:120px;top:432px;height:17px;line-height:18px">-</div><div class="t r " style="left:592px;width:120px;top:432px;height:17px;line-height:18px">20,812</div><div class="t r " style="left:700px;width:120px;top:432px;height:17px;line-height:18px">0</div><div class="t r " style="left:789px;width:120px;top:432px;height:17px;line-height:18px">15</div><div class="t r " style="left:878px;width:120px;top:432px;height:17px;line-height:18px">242</div><div class="t r " style="left:967px;width:120px;top:432px;height:17px;line-height:18px">155</div><div class="t r " style="left:1056px;width:120px;top:432px;height:17px;line-height:18px">199</div><div class="t r " style="left:1145px;width:120px;top:432px;height:17px;line-height:18px">390</div><div class="t r " style="left:1234px;width:120px;top:432px;height:17px;line-height:18px">388</div><div class="t r " style="left:1323px;width:120px;top:432px;height:17px;line-height:18px">386</div><div class="t r " style="left:1412px;width:120px;top:432px;height:17px;line-height:18px">378</div><div class="t r " style="left:1501px;width:120px;top:432px;height:17px;line-height:18px">381</div><div class="t r " style="left:1590px;width:120px;top:432px;height:17px;line-height:18px">378</div><div class="t r " style="left:1679px;width:120px;top:432px;height:17px;line-height:18px">360</div><div class="t r " style="left:1768px;width:120px;top:432px;height:17px;line-height:18px">340</div><div class="t bl" style="left:110px;top:466px;height:17px;line-height:18px">Retained earnings balance BEG</div><div class="t r bl" style="left:324px;width:120px;top:466px;height:17px;line-height:18px">-</div><div class="t bl u" style="left:458px;top:466px;height:17px;line-height:18px">USD k</div><div class="t r bl" style="left:499px;width:120px;top:466px;height:17px;line-height:18px">-</div><div class="t r bl" style="left:590px;width:120px;top:466px;height:17px;line-height:18px">-</div><div class="t r bl" style="left:610px;width:120px;top:466px;height:17px;line-height:18px">-</div><div class="t r bl" style="left:698px;width:120px;top:466px;height:17px;line-height:18px">-</div><div class="t r bl" style="left:787px;width:120px;top:466px;height:17px;line-height:18px">-</div><div class="t r bl" style="left:878px;width:120px;top:466px;height:17px;line-height:18px">244</div><div class="t r bl" style="left:967px;width:120px;top:466px;height:17px;line-height:18px">308</div><div class="t r bl" style="left:1056px;width:120px;top:466px;height:17px;line-height:18px">502</div><div class="t r bl" style="left:1145px;width:120px;top:466px;height:17px;line-height:18px">696</div><div class="t r bl" style="left:1234px;width:120px;top:466px;height:17px;line-height:18px">521</div><div class="t r bl" style="left:1323px;width:120px;top:466px;height:17px;line-height:18px">614</div><div class="t r bl" style="left:1412px;width:120px;top:466px;height:17px;line-height:18px">752</div><div class="t r bl" style="left:1501px;width:120px;top:466px;height:17px;line-height:18px">946</div><div class="t r bl" style="left:1590px;width:120px;top:466px;height:17px;line-height:18px">1,179</div><div class="t r bl" style="left:1679px;width:120px;top:466px;height:17px;line-height:18px">1,238</div><div class="t r bl" style="left:1768px;width:120px;top:466px;height:17px;line-height:18px">1,594</div><div class="t bl" style="left:110px;top:483px;height:17px;line-height:18px">PAT</div><div class="t r bl" style="left:324px;width:120px;top:483px;height:17px;line-height:18px">-</div><div class="t bl u" style="left:458px;top:483px;height:17px;line-height:18px">USD k</div><div class="t r bl" style="left:499px;width:120px;top:483px;height:17px;line-height:18px">-</div><div class="t r bl" style="left:592px;width:120px;top:483px;height:17px;line-height:18px">20,812</div><div class="t r bl" style="left:610px;width:120px;top:483px;height:17px;line-height:18px">-</div><div class="t r bl" style="left:698px;width:120px;top:483px;height:17px;line-height:18px">-</div><div class="t r bl" style="left:789px;width:120px;top:483px;height:17px;line-height:18px">259</div><div class="t r bl" style="left:878px;width:120px;top:483px;height:17px;line-height:18px">306</div><div class="t r bl" style="left:967px;width:120px;top:483px;height:17px;line-height:18px">349</div><div class="t r bl" style="left:1056px;width:120px;top:483px;height:17px;line-height:18px">392</div><div class="t r bl" style="left:1145px;width:120px;top:483px;height:17px;line-height:18px">215</div><div class="t r bl" style="left:1234px;width:120px;top:483px;height:17px;line-height:18px">481</div><div class="t r bl" style="left:1323px;width:120px;top:483px;height:17px;line-height:18px">524</div><div class="t r bl" style="left:1412px;width:120px;top:483px;height:17px;line-height:18px">572</div><div class="t r bl" style="left:1501px;width:120px;top:483px;height:17px;line-height:18px">614</div><div class="t r bl" style="left:1590px;width:120px;top:483px;height:17px;line-height:18px">438</div><div class="t r bl" style="left:1679px;width:120px;top:483px;height:17px;line-height:18px">717</div><div class="t r bl" style="left:1768px;width:120px;top:483px;height:17px;line-height:18px">775</div><div class="t " style="left:110px;top:500px;height:17px;line-height:18px">Max. balance from acct. perspective</div><div class="t  u" style="left:458px;top:500px;height:17px;line-height:18px">USD k</div><div class="t r " style="left:499px;width:120px;top:500px;height:17px;line-height:18px">-</div><div class="t r " style="left:592px;width:120px;top:500px;height:17px;line-height:18px">83,588</div><div class="t r " style="left:698px;width:120px;top:500px;height:17px;line-height:18px">-</div><div class="t r " style="left:789px;width:120px;top:500px;height:17px;line-height:18px">259</div><div class="t r " style="left:878px;width:120px;top:500px;height:17px;line-height:18px">550</div><div class="t r " style="left:967px;width:120px;top:500px;height:17px;line-height:18px">657</div><div class="t r " style="left:1056px;width:120px;top:500px;height:17px;line-height:18px">895</div><div class="t r " style="left:1145px;width:120px;top:500px;height:17px;line-height:18px">911</div><div class="t r " style="left:1234px;width:120px;top:500px;height:17px;line-height:18px">1,001</div><div class="t r " style="left:1323px;width:120px;top:500px;height:17px;line-height:18px">1,138</div><div class="t r " style="left:1412px;width:120px;top:500px;height:17px;line-height:18px">1,323</div><div class="t r " style="left:1501px;width:120px;top:500px;height:17px;line-height:18px">1,560</div><div class="t r " style="left:1590px;width:120px;top:500px;height:17px;line-height:18px">1,616</div><div class="t r " style="left:1679px;width:120px;top:500px;height:17px;line-height:18px">1,954</div><div class="t r " style="left:1768px;width:120px;top:500px;height:17px;line-height:18px">2,370</div><div class="t " style="left:110px;top:534px;height:17px;line-height:18px">Max. balance from cash perspective</div><div class="t r " style="left:324px;width:120px;top:534px;height:17px;line-height:18px">-</div><div class="t  u" style="left:458px;top:534px;height:17px;line-height:18px">USD k</div><div class="t r " style="left:499px;width:120px;top:534px;height:17px;line-height:18px">-</div><div class="t r " style="left:592px;width:120px;top:534px;height:17px;line-height:18px">20,812</div><div class="t r " style="left:610px;width:120px;top:534px;height:17px;line-height:18px">-</div><div class="t r " style="left:700px;width:120px;top:534px;height:17px;line-height:18px">0</div><div class="t r " style="left:789px;width:120px;top:534px;height:17px;line-height:18px">15</div><div class="t r " style="left:878px;width:120px;top:534px;height:17px;line-height:18px">242</div><div class="t r " style="left:967px;width:120px;top:534px;height:17px;line-height:18px">155</div><div class="t r " style="left:1056px;width:120px;top:534px;height:17px;line-height:18px">199</div><div class="t r " style="left:1145px;width:120px;top:534px;height:17px;line-height:18px">390</div><div class="t r " style="left:1234px;width:120px;top:534px;height:17px;line-height:18px">388</div><div class="t r " style="left:1323px;width:120px;top:534px;height:17px;line-height:18px">386</div><div class="t r " style="left:1412px;width:120px;top:534px;height:17px;line-height:18px">378</div><div class="t r " style="left:1501px;width:120px;top:534px;height:17px;line-height:18px">381</div><div class="t r " style="left:1590px;width:120px;top:534px;height:17px;line-height:18px">378</div><div class="t r " style="left:1679px;width:120px;top:534px;height:17px;line-height:18px">360</div><div class="t r " style="left:1768px;width:120px;top:534px;height:17px;line-height:18px">340</div><div class="t " style="left:110px;top:551px;height:17px;line-height:18px">Max. balance from acct. perspective</div><div class="t r " style="left:324px;width:120px;top:551px;height:17px;line-height:18px">-</div><div class="t  u" style="left:458px;top:551px;height:17px;line-height:18px">USD k</div><div class="t r " style="left:499px;width:120px;top:551px;height:17px;line-height:18px">-</div><div class="t r " style="left:592px;width:120px;top:551px;height:17px;line-height:18px">83,588</div><div class="t r " style="left:610px;width:120px;top:551px;height:17px;line-height:18px">-</div><div class="t r " style="left:698px;width:120px;top:551px;height:17px;line-height:18px">-</div><div class="t r " style="left:789px;width:120px;top:551px;height:17px;line-height:18px">259</div><div class="t r " style="left:878px;width:120px;top:551px;height:17px;line-height:18px">550</div><div class="t r " style="left:967px;width:120px;top:551px;height:17px;line-height:18px">657</div><div class="t r " style="left:1056px;width:120px;top:551px;height:17px;line-height:18px">895</div><div class="t r " style="left:1145px;width:120px;top:551px;height:17px;line-height:18px">911</div><div class="t r " style="left:1234px;width:120px;top:551px;height:17px;line-height:18px">1,001</div><div class="t r " style="left:1323px;width:120px;top:551px;height:17px;line-height:18px">1,138</div><div class="t r " style="left:1412px;width:120px;top:551px;height:17px;line-height:18px">1,323</div><div class="t r " style="left:1501px;width:120px;top:551px;height:17px;line-height:18px">1,560</div><div class="t r " style="left:1590px;width:120px;top:551px;height:17px;line-height:18px">1,616</div><div class="t r " style="left:1679px;width:120px;top:551px;height:17px;line-height:18px">1,954</div><div class="t r " style="left:1768px;width:120px;top:551px;height:17px;line-height:18px">2,370</div><div class="t bl" style="left:110px;top:568px;height:17px;line-height:18px">Dividend payout %</div><div class="t r bl" style="left:324px;width:120px;top:568px;height:17px;line-height:18px">-</div><div class="t bl" style="left:458px;top:568px;height:17px;line-height:18px">%</div><div class="t r bl" style="left:499px;width:120px;top:568px;height:17px;line-height:18px">-</div><div class="t r bl" style="left:590px;width:120px;top:568px;height:17px;line-height:18px">-</div><div class="t r bl" style="left:610px;width:120px;top:568px;height:17px;line-height:18px">-</div><div class="t r bl" style="left:701px;width:120px;top:568px;height:17px;line-height:18px">100.00%</div><div class="t r bl" style="left:790px;width:120px;top:568px;height:17px;line-height:18px">100.00%</div><div class="t r bl" style="left:879px;width:120px;top:568px;height:17px;line-height:18px">100.00%</div><div class="t r bl" style="left:968px;width:120px;top:568px;height:17px;line-height:18px">100.00%</div><div class="t r bl" style="left:1057px;width:120px;top:568px;height:17px;line-height:18px">100.00%</div><div class="t r bl" style="left:1146px;width:120px;top:568px;height:17px;line-height:18px">100.00%</div><div class="t r bl" style="left:1235px;width:120px;top:568px;height:17px;line-height:18px">100.00%</div><div class="t r bl" style="left:1324px;width:120px;top:568px;height:17px;line-height:18px">100.00%</div><div class="t r bl" style="left:1413px;width:120px;top:568px;height:17px;line-height:18px">100.00%</div><div class="t r bl" style="left:1502px;width:120px;top:568px;height:17px;line-height:18px">100.00%</div><div class="t r bl" style="left:1591px;width:120px;top:568px;height:17px;line-height:18px">100.00%</div><div class="t r bl" style="left:1680px;width:120px;top:568px;height:17px;line-height:18px">100.00%</div><div class="t r bl" style="left:1769px;width:120px;top:568px;height:17px;line-height:18px">100.00%</div><div class="t bl" style="left:110px;top:585px;height:17px;line-height:18px">Forecast period flag</div><div class="t r bl" style="left:324px;width:120px;top:585px;height:17px;line-height:18px">-</div><div class="t bl" style="left:458px;top:585px;height:17px;line-height:18px">flag</div><div class="t r bl" style="left:499px;width:120px;top:585px;height:17px;line-height:18px">-</div><div class="t r bl" style="left:592px;width:120px;top:585px;height:17px;line-height:18px">26</div><div class="t r bl" style="left:610px;width:120px;top:585px;height:17px;line-height:18px">-</div><div class="t r bl" style="left:700px;width:120px;top:585px;height:17px;line-height:18px">1</div><div class="t r bl" style="left:789px;width:120px;top:585px;height:17px;line-height:18px">1</div><div class="t r bl" style="left:878px;width:120px;top:585px;height:17px;line-height:18px">1</div><div class="t r bl" style="left:967px;width:120px;top:585px;height:17px;line-height:18px">1</div><div class="t r bl" style="left:1056px;width:120px;top:585px;height:17px;line-height:18px">1</div><div class="t r bl" style="left:1145px;width:120px;top:585px;height:17px;line-height:18px">1</div><div class="t r bl" style="left:1234px;width:120px;top:585px;height:17px;line-height:18px">1</div><div class="t r bl" style="left:1323px;width:120px;top:585px;height:17px;line-height:18px">1</div><div class="t r bl" style="left:1412px;width:120px;top:585px;height:17px;line-height:18px">1</div><div class="t r bl" style="left:1501px;width:120px;top:585px;height:17px;line-height:18px">1</div><div class="t r bl" style="left:1590px;width:120px;top:585px;height:17px;line-height:18px">1</div><div class="t r bl" style="left:1679px;width:120px;top:585px;height:17px;line-height:18px">1</div><div class="t r bl" style="left:1768px;width:120px;top:585px;height:17px;line-height:18px">1</div><div class="t rd" style="left:110px;top:602px;height:17px;line-height:18px">Dividends due</div><div class="t rd u" style="left:458px;top:602px;height:17px;line-height:18px">USD k</div><div class="t r rd" style="left:499px;width:120px;top:602px;height:17px;line-height:18px">-</div><div class="t r rd" style="left:592px;width:120px;top:602px;height:17px;line-height:18px">20,812</div><div class="t r rd" style="left:698px;width:120px;top:602px;height:17px;line-height:18px">-</div><div class="t r rd" style="left:789px;width:120px;top:602px;height:17px;line-height:18px">15</div><div class="t r rd" style="left:878px;width:120px;top:602px;height:17px;line-height:18px">242</div><div class="t r rd" style="left:967px;width:120px;top:602px;height:17px;line-height:18px">155</div><div class="t r rd" style="left:1056px;width:120px;top:602px;height:17px;line-height:18px">199</div><div class="t r rd" style="left:1145px;width:120px;top:602px;height:17px;line-height:18px">390</div><div class="t r rd" style="left:1234px;width:120px;top:602px;height:17px;line-height:18px">388</div><div class="t r rd" style="left:1323px;width:120px;top:602px;height:17px;line-height:18px">386</div><div class="t r rd" style="left:1412px;width:120px;top:602px;height:17px;line-height:18px">378</div><div class="t r rd" style="left:1501px;width:120px;top:602px;height:17px;line-height:18px">381</div><div class="t r rd" style="left:1590px;width:120px;top:602px;height:17px;line-height:18px">378</div><div class="t r rd" style="left:1679px;width:120px;top:602px;height:17px;line-height:18px">360</div><div class="t r rd" style="left:1768px;width:120px;top:602px;height:17px;line-height:18px">340</div><div class="t " style="left:110px;top:654px;height:17px;line-height:18px">Dividends due</div><div class="t r " style="left:324px;width:120px;top:654px;height:17px;line-height:18px">-</div><div class="t  u" style="left:458px;top:654px;height:17px;line-height:18px">USD k</div><div class="t r " style="left:499px;width:120px;top:654px;height:17px;line-height:18px">-</div><div class="t r " style="left:592px;width:120px;top:654px;height:17px;line-height:18px">20,812</div><div class="t r " style="left:610px;width:120px;top:654px;height:17px;line-height:18px">-</div><div class="t r " style="left:698px;width:120px;top:654px;height:17px;line-height:18px">-</div><div class="t r " style="left:789px;width:120px;top:654px;height:17px;line-height:18px">15</div><div class="t r " style="left:878px;width:120px;top:654px;height:17px;line-height:18px">242</div><div class="t r " style="left:967px;width:120px;top:654px;height:17px;line-height:18px">155</div><div class="t r " style="left:1056px;width:120px;top:654px;height:17px;line-height:18px">199</div><div class="t r " style="left:1145px;width:120px;top:654px;height:17px;line-height:18px">390</div><div class="t r " style="left:1234px;width:120px;top:654px;height:17px;line-height:18px">388</div><div class="t r " style="left:1323px;width:120px;top:654px;height:17px;line-height:18px">386</div><div class="t r " style="left:1412px;width:120px;top:654px;height:17px;line-height:18px">378</div><div class="t r " style="left:1501px;width:120px;top:654px;height:17px;line-height:18px">381</div><div class="t r " style="left:1590px;width:120px;top:654px;height:17px;line-height:18px">378</div><div class="t r " style="left:1679px;width:120px;top:654px;height:17px;line-height:18px">360</div><div class="t r " style="left:1768px;width:120px;top:654px;height:17px;line-height:18px">340</div><div class="t " style="left:110px;top:671px;height:17px;line-height:18px">Total - Dividends</div><div class="t  u" style="left:458px;top:671px;height:17px;line-height:18px">USD k</div><div class="t r " style="left:499px;width:120px;top:671px;height:17px;line-height:18px">-</div><div class="t r " style="left:592px;width:120px;top:671px;height:17px;line-height:18px">20,812</div><div class="t r " style="left:698px;width:120px;top:671px;height:17px;line-height:18px">-</div><div class="t r " style="left:789px;width:120px;top:671px;height:17px;line-height:18px">15</div><div class="t r " style="left:878px;width:120px;top:671px;height:17px;line-height:18px">242</div><div class="t r " style="left:967px;width:120px;top:671px;height:17px;line-height:18px">155</div><div class="t r " style="left:1056px;width:120px;top:671px;height:17px;line-height:18px">199</div><div class="t r " style="left:1145px;width:120px;top:671px;height:17px;line-height:18px">390</div><div class="t r " style="left:1234px;width:120px;top:671px;height:17px;line-height:18px">388</div><div class="t r " style="left:1323px;width:120px;top:671px;height:17px;line-height:18px">386</div><div class="t r " style="left:1412px;width:120px;top:671px;height:17px;line-height:18px">378</div><div class="t r " style="left:1501px;width:120px;top:671px;height:17px;line-height:18px">381</div><div class="t r " style="left:1590px;width:120px;top:671px;height:17px;line-height:18px">378</div><div class="t r " style="left:1679px;width:120px;top:671px;height:17px;line-height:18px">360</div><div class="t r " style="left:1768px;width:120px;top:671px;height:17px;line-height:18px">340</div><div class="t " style="left:110px;top:777px;height:17px;line-height:18px">Dividends due</div><div class="t r " style="left:324px;width:120px;top:777px;height:17px;line-height:18px">-</div><div class="t  u" style="left:458px;top:777px;height:17px;line-height:18px">USD k</div><div class="t r " style="left:499px;width:120px;top:777px;height:17px;line-height:18px">-</div><div class="t r " style="left:592px;width:120px;top:777px;height:17px;line-height:18px">20,812</div><div class="t r " style="left:610px;width:120px;top:777px;height:17px;line-height:18px">-</div><div class="t r " style="left:698px;width:120px;top:777px;height:17px;line-height:18px">-</div><div class="t r " style="left:789px;width:120px;top:777px;height:17px;line-height:18px">15</div><div class="t r " style="left:878px;width:120px;top:777px;height:17px;line-height:18px">242</div><div class="t r " style="left:967px;width:120px;top:777px;height:17px;line-height:18px">155</div><div class="t r " style="left:1056px;width:120px;top:777px;height:17px;line-height:18px">199</div><div class="t r " style="left:1145px;width:120px;top:777px;height:17px;line-height:18px">390</div><div class="t r " style="left:1234px;width:120px;top:777px;height:17px;line-height:18px">388</div><div class="t r " style="left:1323px;width:120px;top:777px;height:17px;line-height:18px">386</div><div class="t r " style="left:1412px;width:120px;top:777px;height:17px;line-height:18px">378</div><div class="t r " style="left:1501px;width:120px;top:777px;height:17px;line-height:18px">381</div><div class="t r " style="left:1590px;width:120px;top:777px;height:17px;line-height:18px">378</div><div class="t r " style="left:1679px;width:120px;top:777px;height:17px;line-height:18px">360</div><div class="t r " style="left:1768px;width:120px;top:777px;height:17px;line-height:18px">340</div><div class="t bl" style="left:110px;top:794px;height:17px;line-height:18px">Forecast period flag</div><div class="t r bl" style="left:324px;width:120px;top:794px;height:17px;line-height:18px">-</div><div class="t bl" style="left:458px;top:794px;height:17px;line-height:18px">flag</div><div class="t r bl" style="left:499px;width:120px;top:794px;height:17px;line-height:18px">-</div><div class="t r bl" style="left:592px;width:120px;top:794px;height:17px;line-height:18px">26</div><div class="t r bl" style="left:610px;width:120px;top:794px;height:17px;line-height:18px">-</div><div class="t r bl" style="left:700px;width:120px;top:794px;height:17px;line-height:18px">1</div><div class="t r bl" style="left:789px;width:120px;top:794px;height:17px;line-height:18px">1</div><div class="t r bl" style="left:878px;width:120px;top:794px;height:17px;line-height:18px">1</div><div class="t r bl" style="left:967px;width:120px;top:794px;height:17px;line-height:18px">1</div><div class="t r bl" style="left:1056px;width:120px;top:794px;height:17px;line-height:18px">1</div><div class="t r bl" style="left:1145px;width:120px;top:794px;height:17px;line-height:18px">1</div><div class="t r bl" style="left:1234px;width:120px;top:794px;height:17px;line-height:18px">1</div><div class="t r bl" style="left:1323px;width:120px;top:794px;height:17px;line-height:18px">1</div><div class="t r bl" style="left:1412px;width:120px;top:794px;height:17px;line-height:18px">1</div><div class="t r bl" style="left:1501px;width:120px;top:794px;height:17px;line-height:18px">1</div><div class="t r bl" style="left:1590px;width:120px;top:794px;height:17px;line-height:18px">1</div><div class="t r bl" style="left:1679px;width:120px;top:794px;height:17px;line-height:18px">1</div><div class="t r bl" style="left:1768px;width:120px;top:794px;height:17px;line-height:18px">1</div><div class="t rd" style="left:110px;top:811px;height:17px;line-height:18px">Dividends paid</div><div class="t rd u" style="left:458px;top:811px;height:17px;line-height:18px">USD k</div><div class="t r rd" style="left:499px;width:120px;top:811px;height:17px;line-height:18px">-</div><div class="t r rd" style="left:592px;width:120px;top:811px;height:17px;line-height:18px">20,812</div><div class="t r rd" style="left:698px;width:120px;top:811px;height:17px;line-height:18px">-</div><div class="t r rd" style="left:789px;width:120px;top:811px;height:17px;line-height:18px">15</div><div class="t r rd" style="left:878px;width:120px;top:811px;height:17px;line-height:18px">242</div><div class="t r rd" style="left:967px;width:120px;top:811px;height:17px;line-height:18px">155</div><div class="t r rd" style="left:1056px;width:120px;top:811px;height:17px;line-height:18px">199</div><div class="t r rd" style="left:1145px;width:120px;top:811px;height:17px;line-height:18px">390</div><div class="t r rd" style="left:1234px;width:120px;top:811px;height:17px;line-height:18px">388</div><div class="t r rd" style="left:1323px;width:120px;top:811px;height:17px;line-height:18px">386</div><div class="t r rd" style="left:1412px;width:120px;top:811px;height:17px;line-height:18px">378</div><div class="t r rd" style="left:1501px;width:120px;top:811px;height:17px;line-height:18px">381</div><div class="t r rd" style="left:1590px;width:120px;top:811px;height:17px;line-height:18px">378</div><div class="t r rd" style="left:1679px;width:120px;top:811px;height:17px;line-height:18px">360</div><div class="t r rd" style="left:1768px;width:120px;top:811px;height:17px;line-height:18px">340</div><div class="t " style="left:110px;top:863px;height:17px;line-height:18px">Dividends paid</div><div class="t r " style="left:324px;width:120px;top:863px;height:17px;line-height:18px">-</div><div class="t  u" style="left:458px;top:863px;height:17px;line-height:18px">USD k</div><div class="t r " style="left:499px;width:120px;top:863px;height:17px;line-height:18px">-</div><div class="t r " style="left:592px;width:120px;top:863px;height:17px;line-height:18px">20,812</div><div class="t r " style="left:610px;width:120px;top:863px;height:17px;line-height:18px">-</div><div class="t r " style="left:698px;width:120px;top:863px;height:17px;line-height:18px">-</div><div class="t r " style="left:789px;width:120px;top:863px;height:17px;line-height:18px">15</div><div class="t r " style="left:878px;width:120px;top:863px;height:17px;line-height:18px">242</div><div class="t r " style="left:967px;width:120px;top:863px;height:17px;line-height:18px">155</div><div class="t r " style="left:1056px;width:120px;top:863px;height:17px;line-height:18px">199</div><div class="t r " style="left:1145px;width:120px;top:863px;height:17px;line-height:18px">390</div><div class="t r " style="left:1234px;width:120px;top:863px;height:17px;line-height:18px">388</div><div class="t r " style="left:1323px;width:120px;top:863px;height:17px;line-height:18px">386</div><div class="t r " style="left:1412px;width:120px;top:863px;height:17px;line-height:18px">378</div><div class="t r " style="left:1501px;width:120px;top:863px;height:17px;line-height:18px">381</div><div class="t r " style="left:1590px;width:120px;top:863px;height:17px;line-height:18px">378</div><div class="t r " style="left:1679px;width:120px;top:863px;height:17px;line-height:18px">360</div><div class="t r " style="left:1768px;width:120px;top:863px;height:17px;line-height:18px">340</div><div class="t " style="left:110px;top:880px;height:17px;line-height:18px">Total - Dividends</div><div class="t  u" style="left:458px;top:880px;height:17px;line-height:18px">USD k</div><div class="t r " style="left:499px;width:120px;top:880px;height:17px;line-height:18px">-</div><div class="t r " style="left:592px;width:120px;top:880px;height:17px;line-height:18px">20,812</div><div class="t r " style="left:698px;width:120px;top:880px;height:17px;line-height:18px">-</div><div class="t r " style="left:789px;width:120px;top:880px;height:17px;line-height:18px">15</div><div class="t r " style="left:878px;width:120px;top:880px;height:17px;line-height:18px">242</div><div class="t r " style="left:967px;width:120px;top:880px;height:17px;line-height:18px">155</div><div class="t r " style="left:1056px;width:120px;top:880px;height:17px;line-height:18px">199</div><div class="t r " style="left:1145px;width:120px;top:880px;height:17px;line-height:18px">390</div><div class="t r " style="left:1234px;width:120px;top:880px;height:17px;line-height:18px">388</div><div class="t r " style="left:1323px;width:120px;top:880px;height:17px;line-height:18px">386</div><div class="t r " style="left:1412px;width:120px;top:880px;height:17px;line-height:18px">378</div><div class="t r " style="left:1501px;width:120px;top:880px;height:17px;line-height:18px">381</div><div class="t r " style="left:1590px;width:120px;top:880px;height:17px;line-height:18px">378</div><div class="t r " style="left:1679px;width:120px;top:880px;height:17px;line-height:18px">360</div><div class="t r " style="left:1768px;width:120px;top:880px;height:17px;line-height:18px">340</div><div class="f" style="left:737px;top:156px;width:1px;height:867px;background:#8c8c8c"></div><div class="f" style="left:65px;top:271px;width:1830px;height:1px;background:#8c8c8c"></div><div class="g" style="left:738px;top:270px;width:90px;height:1px"></div><div class="g" style="left:736px;top:272px;width:1px;height:19px"></div><div class="g" style="left:826px;top:272px;width:2px;height:14px"></div><div class="g" style="left:736px;top:289px;width:87px;height:2px"></div><div class="f" style="left:823px;top:286px;width:6px;height:6px;background:#fff"></div><div class="g" style="left:824px;top:287px;width:5px;height:5px"></div><div class="f" style="left:1894px;top:156px;width:1px;height:868px;background:#a0a0a0"></div><div class="lvl" style="left:2px">1</div><div class="lvl" style="left:19px">2</div>
<svg style="left:50px;top:141px" width="11" height="11" viewBox="0 0 11 11"><path d="M11 0V11H0Z" fill="#b4b4b4"/></svg>
<div class="f" style="left:64px;top:136px;width:1px;height:887px;background:#9a9a9a"></div><div class="f" style="left:39px;top:155px;width:26px;height:1px;background:#ababab"></div>
<div class="obox" style="top:362px"></div><div class="oline" style="top:379px;height:240px"></div><div class="ofoot" style="top:617px"></div>
<div class="obox" style="top:759px"></div><div class="oline" style="top:776px;height:52px"></div><div class="ofoot" style="top:826px"></div>
<div class="odot" style="top:388px"></div><div class="odot" style="top:405px"></div><div class="odot" style="top:422px"></div><div class="odot" style="top:439px"></div><div class="odot" style="top:456px"></div><div class="odot" style="top:473px"></div><div class="odot" style="top:490px"></div><div class="odot" style="top:507px"></div><div class="odot" style="top:524px"></div><div class="odot" style="top:541px"></div><div class="odot" style="top:558px"></div><div class="odot" style="top:575px"></div><div class="odot" style="top:592px"></div><div class="odot" style="top:609px"></div><div class="odot" style="top:784px"></div><div class="odot" style="top:801px"></div><div class="odot" style="top:818px"></div>
</div>
<div id="tabbar">
<div style="left:0;top:-1px;width:1895px;height:1px;background:#ababab"></div>
<svg style="left:27px;top:8px" width="7" height="11" viewBox="0 0 7 11"><path d="M6.5 0.5V10.5L0.5 5.5Z" fill="#217346"/></svg>
<svg style="left:56px;top:8px" width="7" height="11" viewBox="0 0 7 11"><path d="M0.5 0.5V10.5L6.5 5.5Z" fill="#217346"/></svg>
<span style="left:81px;top:0;line-height:22px;font-size:16px;color:#217346;letter-spacing:1px">...</span>
<div class="tsep" style="left:103px"></div>
<div class="tab" style="left:106px;width:98px">Escalation</div><div class="tsep" style="left:206px"></div>
<div class="tab" style="left:209px;width:80px">Volume</div><div class="tsep" style="left:291px"></div>
<div class="tab" style="left:294px;width:86px">Revenue</div><div class="tsep" style="left:382px"></div>
<div class="tab" style="left:385px;width:61px">Costs</div><div class="tsep" style="left:448px"></div>
<div class="tab" style="left:451px;width:61px">Opex</div><div class="tsep" style="left:514px"></div>
<div class="tab" style="left:517px;width:68px">Capex</div><div class="tsep" style="left:587px"></div>
<div class="tab" style="left:590px;width:96px">Financing</div><div class="tsep" style="left:688px"></div>
<div class="tab" style="left:691px;width:59px">Debt</div><div class="tsep" style="left:752px"></div>
<div class="tab" style="left:755px;width:70px">Equity</div><div class="tsep" style="left:827px"></div>
<div class="tab" style="left:830px;width:47px">Tax</div><div class="tsep" style="left:879px"></div>
<div class="tab" style="left:882px;width:87px">Reserves</div>
<div class="tab act" style="left:971px;width:105px">Dividends</div>
<span style="left:1084px;top:0;line-height:22px;font-size:16px;color:#217346;letter-spacing:1px">...</span>
<svg style="left:1110px;top:4px" width="21" height="21" viewBox="0 0 21 21" fill="none" stroke="#666" stroke-width="1.2"><circle cx="10.5" cy="10.5" r="9.5"/><path d="M10.5 5.5V15.5M5.5 10.5H15.5"/></svg>
<svg style="left:1148px;top:7px" width="4" height="14" viewBox="0 0 4 14" fill="#b0b0b0"><rect x="0.5" y="0.5" width="3" height="3"/><rect x="0.5" y="5.5" width="3" height="3"/><rect x="0.5" y="10.5" width="3" height="3"/></svg>
<div style="left:1167px;top:4px;width:726px;height:19px;background:#dcdcdc"></div>
<div style="left:1167px;top:4px;width:19px;height:19px;background:#fff;border:1px solid #b4b4b4"></div>
<svg style="left:1173px;top:8px" width="6" height="10" viewBox="0 0 6 10"><path d="M5.5 0.5V9.5L0.5 5Z" fill="#555"/></svg>
<div style="left:1185px;top:4px;width:378px;height:19px;background:#fff;border:1px solid #b4b4b4"></div>
<div style="left:1874px;top:4px;width:19px;height:19px;background:#fff;border:1px solid #b4b4b4"></div>
<svg style="left:1882px;top:8px" width="6" height="10" viewBox="0 0 6 10"><path d="M0.5 0.5V9.5L5.5 5Z" fill="#555"/></svg>
</div>
<div id="statusbar">
<span class="s" style="left:9px">Ready</span>
<span class="s" style="left:65px">Calculate</span>
<svg style="left:142px;top:6px" width="19" height="16" viewBox="0 0 19 16" fill="none" stroke="#555" stroke-width="1.3"><path d="M0.7 3.5V0.7H17.3V3.5"/><path d="M1 5.5H6M1 8.5H5M1 11.5H5M1 14.5H6"/><circle cx="12" cy="10" r="5.2"/><circle cx="12" cy="10" r="2.2" fill="#555"/></svg>
<div style="left:1555px;top:0;width:50px;height:26px;background:#d2d0ce"></div>
<svg style="left:1571px;top:4px" width="17" height="16" viewBox="0 0 17 16" fill="none" stroke="#555" stroke-width="1.4"><rect x="0.7" y="0.7" width="15.6" height="14.6"/><path d="M0.7 5.5H16.3M0.7 10.5H16.3M6 0.7V15.3M11 0.7V15.3"/></svg>
<svg style="left:1621px;top:4px" width="18" height="16" viewBox="0 0 18 16" fill="none" stroke="#555" stroke-width="1.4"><rect x="0.7" y="0.7" width="16.6" height="14.6"/><rect x="4" y="3.5" width="10" height="9.5"/><path d="M6 6H12M6 8.3H12M6 10.6H12" stroke-width="1"/></svg>
<svg style="left:1671px;top:4px" width="18" height="16" viewBox="0 0 18 16" fill="none" stroke="#555" stroke-width="1.4"><rect x="0.7" y="0.7" width="16.6" height="14.6"/><path d="M4.5 0.7V9H13V0.7M9 0.7V9"/></svg>
<div style="left:1712px;top:12px;width:10px;height:1px;background:#555"></div>
<div style="left:1728px;top:13px;width:125px;height:1px;background:#a0a0a0"></div>
<div style="left:1790px;top:9px;width:1px;height:9px;background:#a0a0a0"></div>
<div style="left:1775px;top:6px;width:6px;height:14px;background:#767676"></div>
<div style="left:1859px;top:12px;width:10px;height:1px;background:#555"></div><div style="left:1863px;top:8px;width:1px;height:10px;background:#555"></div>
<span class="s" style="left:1885px">80%</span>
</div>
<div id="bottomline"></div><div style="left:60px;top:1078px;width:430px;height:2px;background:#cfcfcf"></div><div style="left:864px;top:1078px;width:61px;height:2px;background:#7a7a7a"></div>
</div>
</body></html>
